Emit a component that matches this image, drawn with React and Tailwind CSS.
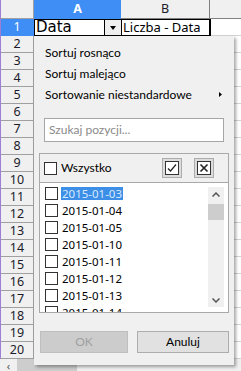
import React from 'react';

const ROWS = Array.from({ length: 20 }, (_, i) => i + 1);
const DATES = ['2015-01-03', '2015-01-04', '2015-01-05', '2015-01-10', '2015-01-11', '2015-01-12', '2015-01-13', '2015-01-14'];

const Check = () => <span className="block w-[13px] h-[13px] shrink-0 border border-[#333] bg-white" />;

const IconButton = ({ children }) => (
  <button className="w-[20px] h-[20px] flex items-center justify-center bg-[#dcdcdc] border border-[#adadad]">
    <svg width="14" height="14" viewBox="0 0 14 14">
      <rect x="0.5" y="0.5" width="13" height="13" fill="#fff" stroke="#333" />
      {children}
    </svg>
  </button>
);

const Popup = () => (
  <div className="absolute left-[34px] top-[36px] w-[200px] h-[329px] bg-[#f0f0f0] shadow-[2px_2px_3px_rgba(0,0,0,0.35)] text-[12px] text-black font-['Lato',sans-serif]">
    <div className="pt-[6px]">
      <div className="h-[21px] flex items-center pl-[11px]">Sortuj rosnąco</div>
      <div className="h-[21px] flex items-center pl-[11px]">Sortuj malejąco</div>
      <div className="h-[21px] flex items-center pl-[11px] pr-[12px]">
        <span>Sortowanie niestandardowe</span>
        <svg className="ml-auto" width="3" height="5" viewBox="0 0 3 5"><path d="M0 0 L3 2.5 L0 5 Z" fill="#000" /></svg>
      </div>
    </div>
    <div className="mt-[13px] ml-[10px] w-[180px] h-[24px] bg-white border border-[#a6a6a6] flex items-center pl-[4px] text-[#8a8a8a]">
      Szukaj pozycji...
    </div>
    <div className="mt-[11px] ml-[5px] w-[190px] border border-[#a9a9a9]">
      <div className="h-[29px] flex items-center pl-[4px] pr-[14px] border-b border-[#a9a9a9]">
        <Check />
        <span className="ml-[4px]">Wszystko</span>
        <div className="ml-auto flex gap-[12px]">
          <IconButton>
            <path d="M3 7.5 L5.5 10 L11 3.5" fill="none" stroke="#222" strokeWidth="1.2" />
          </IconButton>
          <IconButton>
            <path d="M3.5 3.5 L10.5 10.5 M10.5 3.5 L3.5 10.5" fill="none" stroke="#222" strokeWidth="1.6" />
          </IconButton>
        </div>
      </div>
      <div className="h-[129px] bg-white flex overflow-hidden">
        <div className="flex-1 pl-[5px] pt-[2px]">
          {DATES.map((d, i) => (
            <div key={d} className="h-[17px] flex items-center text-[11.5px] font-['Noto_Sans',sans-serif]">
              <Check />
              <span className={i === 0 ? 'ml-[3px] px-[1px] leading-[13px] bg-[#3d8ee6] text-[#d6e9ff]' : 'ml-[4px]'}>{d}</span>
            </div>
          ))}
        </div>
        <div className="w-[16px] mr-[4px] mt-[4px] mb-[5px] bg-[#f0f0f0] flex flex-col">
          <div className="h-[14px] flex items-center justify-center">
            <svg width="8" height="5" viewBox="0 0 8 5"><path d="M0.5 4.5 L4 1 L7.5 4.5" fill="none" stroke="#555" strokeWidth="1.5" /></svg>
          </div>
          <div className="h-[16px] mt-[3px] bg-[#cdcdcd]" />
          <div className="flex-1" />
          <div className="h-[14px] flex items-center justify-center">
            <svg width="8" height="5" viewBox="0 0 8 5"><path d="M0.5 0.5 L4 4 L7.5 0.5" fill="none" stroke="#555" strokeWidth="1.5" /></svg>
          </div>
        </div>
      </div>
    </div>
    <div className="mt-[18px] flex pl-[6px] gap-[9px]">
      <button className="w-[88px] h-[22px] bg-[#cccccc] border border-[#bfbfbf] text-[#a0a0a0]">OK</button>
      <button className="w-[92px] h-[22px] bg-[#e1e1e1] border border-[#adadad] text-black">Anuluj</button>
    </div>
  </div>
);

export default function App() {
  return (
    <div className="relative w-[241px] h-[371px] overflow-hidden bg-white font-['Noto_Sans',sans-serif] text-[12.5px] text-[#1b1b2b]">
      <div className="border-l border-[#9d7fd6]">
        <div className="flex h-[19px]">
          <div className="w-[33px] bg-[#f0f0f0] border-r border-b border-[#a0a0a0]" />
          <div className="w-[87px] bg-[#3e8ef5] text-white font-bold flex items-center justify-center border-b border-[#3e8ef5]">A</div>
          <div className="w-[89px] bg-[#f0f0f0] border-r border-b border-[#808080] flex items-center justify-center">B</div>
          <div className="flex-1 bg-[#f0f0f0] border-b border-[#808080]" />
        </div>
        {ROWS.map((r) => (
          <div key={r} className="flex h-[17px]">
            <div className={r === 1
              ? 'w-[33px] bg-[#3e8ef5] text-white flex items-center justify-center border-r border-b border-[#3e8ef5]'
              : 'w-[33px] bg-[#f0f0f0] flex items-center justify-center border-r border-b border-[#a0a0a0]'}>{r}</div>
            {r === 1 ? (
              <div className="flex w-[177px] border border-black border-r-2">
                <div className="w-[86px] flex items-center">
                  <span className="pl-[1px] text-black text-[15px] font-['DejaVu_Sans',sans-serif] leading-none">Data</span>
                  <div className="ml-auto w-[17px] h-full bg-[#efefef] border-l border-black flex items-center justify-center">
                    <svg width="6" height="4" viewBox="0 0 6 4"><path d="M0 0 L6 0 L3 4 Z" fill="#000" /></svg>
                  </div>
                </div>
                <div className="flex-1 flex items-center border-l border-black pl-[1px] text-black text-[13px]">Liczba - Data</div>
              </div>
            ) : (
              <>
                <div className="w-[87px] border-r border-b border-[#d4d4d4]" />
                <div className="w-[89px] border-r border-b border-[#d4d4d4]" />
              </>
            )}
            <div className="flex-1 border-b border-[#d4d4d4]" />
          </div>
        ))}
      </div>
      <div className="flex h-[12px] bg-[#f0f0f0]">
        <div className="w-[17px] flex items-center justify-center text-[#555] text-[11px] leading-none">‹</div>
        <div className="w-[60px] bg-[#cdcdcd]" />
      </div>
      <Popup />
    </div>
  );
}
